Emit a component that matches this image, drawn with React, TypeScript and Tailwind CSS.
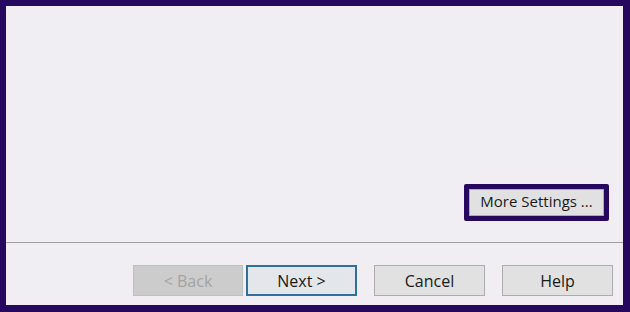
import React from 'react';

const WizButton = ({ label, variant = 'normal', width = 'w-[111px]' }: { label: string, variant?: 'normal' | 'disabled' | 'default', width?: string }) => {
    const styles = {
        normal: 'bg-[#e1e1e1] border border-[#adadad] text-[#1a1a1a]',
        disabled: 'bg-[#cccccc] border border-[#bfbfbf] text-[#a3a3a3]',
        default: 'bg-[#e3e6ea] border-2 border-[#2f6f9f] text-[#1a1a1a]',
    };
    return (
        <button className={`${width} h-[31px] flex items-center justify-center text-[16px] leading-none ${styles[variant]}`}>
            {label}
        </button>
    );
};

export default function App() {
    return (
        <div
            className="w-[630px] h-[312px] bg-[#f0eef2] border-t-[6px] border-l-[6px] border-r-[7px] border-b-[7px] border-[#26095e] flex flex-col"
            style={{ fontFamily: '"Open Sans", "Noto Sans", sans-serif' }}
        >
            {/* Upper area */}
            <div className="flex-1 flex items-end justify-end pr-[14px] pb-[21px]">
                <div className="border-[5px] border-[#26095e] rounded-[2px]">
                    <button className="w-[135px] h-[27px] bg-[#e1e1e1] border border-[#adadad] text-[15px] leading-none text-[#1a1a1a] flex items-center justify-center pb-[2px]">
                        More Settings ...
                    </button>
                </div>
            </div>

            {/* Separator */}
            <div className="h-px bg-[#a0a0a0]" />

            {/* Buttons */}
            <div className="h-[62px] flex items-start pt-[22px] pl-[127px]">
                <WizButton label="< Back" variant="disabled" width="w-[110px]" />
                <div className="w-[3px]" />
                <WizButton label="Next >" variant="default" />
                <div className="w-[17px]" />
                <WizButton label="Cancel" />
                <div className="w-[17px]" />
                <WizButton label="Help" />
            </div>
        </div>
    );
}
